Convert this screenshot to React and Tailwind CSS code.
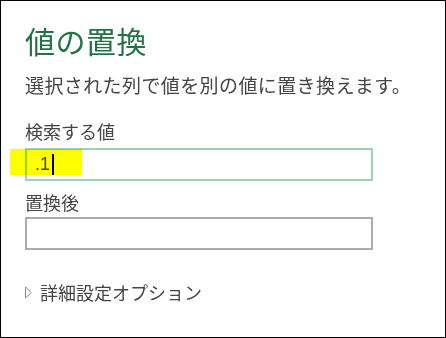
import React from 'react';

const font = { fontFamily: "'Noto Sans CJK JP', 'Noto Sans', sans-serif" };

const App = () => {
  return (
    <div className="w-[446px] h-[338px] bg-white border border-black text-[#444444] relative overflow-hidden" style={font}>
      <div className="flex flex-col pl-[24px]">
        {/* タイトル */}
        <h1 className="mt-[21px] h-[36px] leading-[36px] text-[30px] tracking-[0.5px] text-[#217346]">
          値の置換
        </h1>

        <p className="mt-[13px] h-[28px] leading-[28px] text-[19px] tracking-[0.4px]">
          選択された列で値を別の値に置き換えます。
        </p>

        <label className="mt-[19px] h-[26px] leading-[26px] text-[18px]">
          検索する値
        </label>
        <div className="mt-[4px] w-[348px] h-[33px] border-2 border-[#99d3b2] flex items-center pl-[8px] text-[18px] text-[#444444]" style={{ fontFamily: "'Liberation Sans', sans-serif" }}>
          <span>.1</span>
          <span className="ml-[2px] w-[2px] h-[21px] bg-black"></span>
        </div>

        <label className="mt-[8px] h-[26px] leading-[26px] text-[18px]">
          置換後
        </label>
        <div className="mt-[2px] w-[348px] h-[33px] border-2 border-[#ababab]"></div>

        {/* 詳細設定 */}
        <div className="mt-[29px] h-[26px] flex items-center gap-[8px]">
          <svg width="7" height="13" viewBox="0 0 7 13">
            <path d="M0.5 0.8 L6.2 6.5 L0.5 12.2 Z" fill="none" stroke="#8a8a8a" strokeWidth="1" />
          </svg>
          <span className="text-[18px] leading-[26px]">詳細設定オプション</span>
        </div>
      </div>

      {/* 黄色のマーカー */}
      <div className="absolute left-[9px] top-[148px] w-[72px] h-[26px] bg-[#ffff00] mix-blend-multiply pointer-events-none"></div>
    </div>
  );
};

export default App;
